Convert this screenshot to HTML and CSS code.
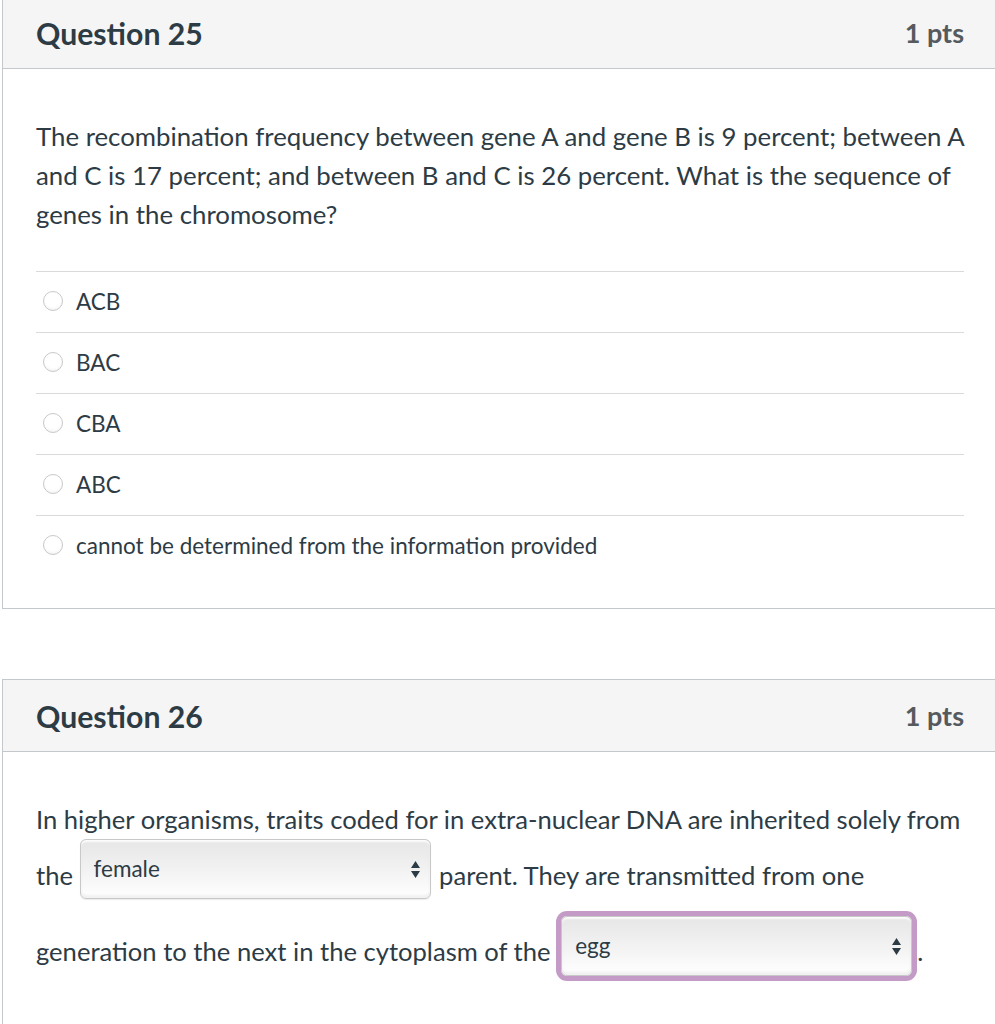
FILE: index.html
```html
<!DOCTYPE html>
<html>
<head>
<meta charset="utf-8">
<link rel="stylesheet" href="styles.css">
</head>
<body>
<div class="page">
  <section class="question">
    <header class="q-header">
      <h2 class="q-title">Question 25</h2>
      <span class="q-pts">1 pts</span>
    </header>
    <div class="q-body">
      <p class="q-text">The recombination frequency between gene A and gene B is 9 percent; between A and C is 17 percent; and between B and C is 26 percent. What is the sequence of genes in the chromosome?</p>
      <ul class="answers">
        <li class="answer"><span class="radio"></span><span class="answer-label">ACB</span></li>
        <li class="answer"><span class="radio"></span><span class="answer-label">BAC</span></li>
        <li class="answer"><span class="radio"></span><span class="answer-label">CBA</span></li>
        <li class="answer"><span class="radio"></span><span class="answer-label">ABC</span></li>
        <li class="answer"><span class="radio"></span><span class="answer-label">cannot be determined from the information provided</span></li>
      </ul>
    </div>
  </section>

  <section class="question">
    <header class="q-header">
      <h2 class="q-title">Question 26</h2>
      <span class="q-pts">1 pts</span>
    </header>
    <div class="q-body q-body-dd">
      <p class="q-text dd-text">In higher organisms, traits coded for in extra-nuclear DNA are inherited solely from the <span class="select"><span class="select-value">female</span><svg class="select-arrows" width="9" height="17" viewBox="0 0 9 17"><path d="M4.5 0 L9 7 L0 7 Z M0 10 L9 10 L4.5 17 Z" fill="#2d3b45"/></svg></span> parent. They are transmitted from one generation to the next in the cytoplasm of the <span class="select focused"><span class="select-value">egg</span><svg class="select-arrows" width="9" height="17" viewBox="0 0 9 17"><path d="M4.5 0 L9 7 L0 7 Z M0 10 L9 10 L4.5 17 Z" fill="#2d3b45"/></svg></span>.</p>
    </div>
  </section>
</div>
</body>
</html>
```

FILE: styles.css
```css
html, body {
  margin: 0;
  padding: 0;
  background: #ffffff;
  overflow: hidden;
}
body {
  font-family: Lato, "Open Sans", sans-serif;
  color: #2d3b45;
}
.page {
  width: 998px;
  margin: -4px 0 0 2px;
  display: flex;
  flex-direction: column;
  gap: 70px;
}
.question {
  border: 1px solid #c4c8cb;
  background: #fff;
}
.q-header {
  background: #f5f5f5;
  border-bottom: 1px solid #c4c8cb;
  height: 71px;
  display: flex;
  align-items: center;
  justify-content: space-between;
  padding: 0 35px 0 33px;
}
.q-title {
  margin: 0;
  font-size: 30.2px;
  font-weight: 700;
  color: #2d3b45;
}
.q-pts {
  font-size: 27px;
  font-weight: 700;
  color: #555a5e;
}
.q-body {
  padding: 48px 35px 32px 33px;
}
.q-text {
  margin: 0;
  font-size: 25.8px;
  line-height: 39px;
}
.answers {
  list-style: none;
  margin: 37px 0 0 0;
  padding: 0;
}
.answer {
  border-top: 1px solid #dadada;
  box-sizing: border-box;
  height: 61px;
  padding-bottom: 2px;
  display: flex;
  align-items: center;
  font-size: 22.5px;
}
.radio {
  width: 18px;
  height: 18px;
  border-radius: 50%;
  border: 1px solid #c9c9c9;
  background: radial-gradient(circle at 50% 35%, #ffffff 55%, #ececec 100%);
  margin: 0 13px 0 7px;
  flex: none;
}
.q-body-dd {
  padding-top: 48px;
  padding-bottom: 60px;
}
.dd-text {
  font-size: 25.6px;
  line-height: 39px;
}
.select {
  display: inline-flex;
  align-items: center;
  justify-content: space-between;
  box-sizing: border-box;
  width: 351px;
  height: 60px;
  padding: 0 10px 0 13px;
  border: 1px solid #c8c8c8;
  border-radius: 6px;
  background: linear-gradient(#e6e6e6, #f3f3f3 55%, #ffffff);
  box-shadow: inset 0 2px 2px rgba(255,255,255,0.9), inset 0 -3px 3px rgba(0,0,0,0.06), 0 1px 1px rgba(0,0,0,0.08);
  vertical-align: 8px;
  margin: 0 2px 11px 0;
  font-size: 22.5px;
  line-height: 26px;
}
.select-value {
  color: #2d3b45;
}
.select-arrows {
  flex: none;
}
.select.focused {
  box-shadow: 0 0 0 5px #c39bc6, inset 0 2px 2px rgba(255,255,255,0.9), inset 0 -3px 3px rgba(0,0,0,0.06);
  border-color: #c8c8c8;
  margin: 6px 5px 5px 4px;
  vertical-align: 7px;
}
```
